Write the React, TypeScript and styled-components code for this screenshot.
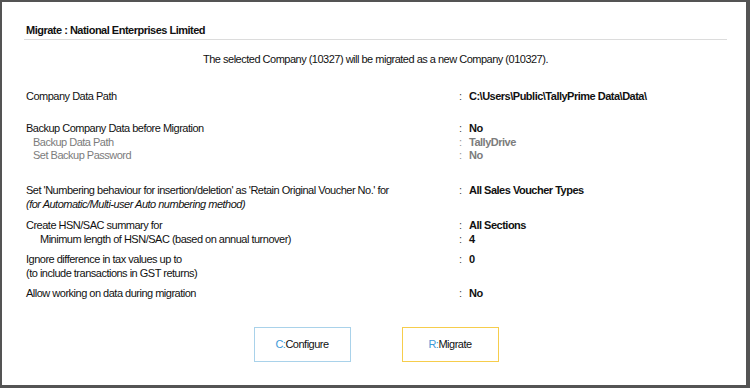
import React from "react";
import styled, { createGlobalStyle } from "styled-components";

const GlobalStyle = createGlobalStyle`
  html, body { margin: 0; padding: 0; background: #ffffff; }
  * { box-sizing: border-box; }
`;

const FONT = `"Liberation Sans", Arial, sans-serif`;

const Frame = styled.div`
  width: 750px;
  height: 388px;
  border-style: solid;
  border-color: #545454;
  border-width: 2px 4px 3px 2px;
  background: #ffffff;
  padding: 21px 19px 0 22px;
  display: flex;
  flex-direction: column;
  font-family: ${FONT};
  font-size: 11px;
  letter-spacing: -0.5px;
  color: #111111;
`;

const Header = styled.div`
  padding: 0 0 2px 2px;
  line-height: 14px;
  font-weight: bold;
  border-bottom: 1px solid #dcdcdc;
`;

const Intro = styled.div`
  margin-top: 12px;
  line-height: 14px;
  text-align: center;
`;

const Group = styled.div<{ $space: number }>`
  margin-top: ${(p) => p.$space}px;
  display: flex;
  flex-direction: column;
`;

const Row = styled.div<{ $muted?: boolean; $lh?: number }>`
  display: grid;
  grid-template-columns: 433px 10px 1fr;
  padding-left: 2px;
  line-height: ${(p) => p.$lh ?? 14}px;
  color: ${(p) => (p.$muted ? "#7c7c7c" : "#111111")};
`;

const Label = styled.span<{ $indent?: number; $italic?: boolean }>`
  padding-left: ${(p) => p.$indent ?? 0}px;
  font-style: ${(p) => (p.$italic ? "italic" : "normal")};
  white-space: nowrap;
`;

const Colon = styled.span`
  color: inherit;
  opacity: 0.8;
`;

const Value = styled.span`
  font-weight: bold;
  white-space: nowrap;
`;

const Buttons = styled.div`
  margin-top: 27px;
  display: flex;
  justify-content: center;
  gap: 51px;
  padding-left: 1px;
`;

const Button = styled.button<{ $accent: string }>`
  width: 97px;
  height: 35px;
  background: #ffffff;
  border: 1px solid ${(p) => p.$accent};
  font-family: ${FONT};
  font-size: 11px;
  letter-spacing: -0.5px;
  color: #111111;
  padding: 0;
  display: flex;
  align-items: center;
  justify-content: center;
  cursor: pointer;
`;

const Key = styled.span`
  color: #3d9ad8;
`;

type Line = {
  label: string;
  value?: string;
  indent?: number;
  muted?: boolean;
  italic?: boolean;
  lh?: number;
};

const groups: { space: number; lines: Line[] }[] = [
  { space: 23, lines: [{ label: "Company Data Path", value: "C:\\Users\\Public\\TallyPrime Data\\Data\\" }] },
  {
    space: 19,
    lines: [
      { label: "Backup Company Data before Migration", value: "No", lh: 13.5 },
      { label: "Backup Data Path", value: "TallyDrive", indent: 7, muted: true, lh: 13.5 },
      { label: "Set Backup Password", value: "No", indent: 7, muted: true, lh: 13.5 },
    ],
  },
  {
    space: 20,
    lines: [
      {
        label: "Set 'Numbering behaviour for insertion/deletion' as 'Retain Original Voucher No.' for",
        value: "All Sales Voucher Types",
      },
      { label: "(for Automatic/Multi-user Auto numbering method)", italic: true },
    ],
  },
  {
    space: 7,
    lines: [
      { label: "Create HSN/SAC summary for", value: "All Sections" },
      { label: "Minimum length of HSN/SAC (based on annual turnover)", value: "4", indent: 14 },
    ],
  },
  {
    space: 6,
    lines: [
      { label: "Ignore difference in tax values up to", value: "0" },
      { label: "(to include transactions in GST returns)" },
    ],
  },
  { space: 6, lines: [{ label: "Allow working on data during migration", value: "No" }] },
];

export default function App() {
  return (
    <>
      <GlobalStyle />
      <Frame>
        <Header>Migrate : National Enterprises Limited</Header>
        <Intro>The selected Company (10327) will be migrated as a new Company (010327).</Intro>
        {groups.map((g, gi) => (
          <Group key={gi} $space={g.space}>
            {g.lines.map((l, li) => (
              <Row key={li} $muted={l.muted} $lh={l.lh}>
                <Label $indent={l.indent} $italic={l.italic}>
                  {l.label}
                </Label>
                <Colon>{l.value !== undefined ? ":" : ""}</Colon>
                <Value>{l.value ?? ""}</Value>
              </Row>
            ))}
          </Group>
        ))}
        <Buttons>
          <Button $accent="#a9d2ea">
            <Key>C:</Key>Configure
          </Button>
          <Button $accent="#f6cd4c">
            <Key>R:</Key>Migrate
          </Button>
        </Buttons>
      </Frame>
    </>
  );
}
